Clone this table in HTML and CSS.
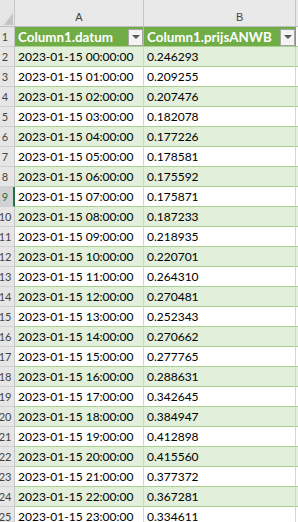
FILE: index.html
```html
<!DOCTYPE html>
<html>
<head>
<meta charset="utf-8">
<link rel="stylesheet" href="styles.css">
</head>
<body>
<div class="sheet">
  <div class="row colhead">
    <div class="corner"><svg width="9" height="12" viewBox="0 0 9 12"><polygon points="9,0 9,12 0,12" fill="#c4c4c4"/></svg></div>
    <div class="ch cha">A</div>
    <div class="ch chb">B</div>
    <div class="ch chc"></div>
  </div>
  <div class="row thead">
    <div class="rh"><span>1</span></div>
    <div class="cell th"><span>Column1.datum</span><i class="dd"></i></div>
    <div class="cell th"><span>Column1.prijsANWB</span><i class="dd"></i></div>
    <div class="cell th thc"></div>
  </div>
  <div class="row band"><div class="rh"><span>2</span></div><div class="cell">2023-01-15 00:00:00</div><div class="cell">0.246293</div><div class="cell"></div></div>
  <div class="row"><div class="rh"><span>3</span></div><div class="cell">2023-01-15 01:00:00</div><div class="cell">0.209255</div><div class="cell"></div></div>
  <div class="row band"><div class="rh"><span>4</span></div><div class="cell">2023-01-15 02:00:00</div><div class="cell">0.207476</div><div class="cell"></div></div>
  <div class="row"><div class="rh"><span>5</span></div><div class="cell">2023-01-15 03:00:00</div><div class="cell">0.182078</div><div class="cell"></div></div>
  <div class="row band"><div class="rh"><span>6</span></div><div class="cell">2023-01-15 04:00:00</div><div class="cell">0.177226</div><div class="cell"></div></div>
  <div class="row"><div class="rh"><span>7</span></div><div class="cell">2023-01-15 05:00:00</div><div class="cell">0.178581</div><div class="cell"></div></div>
  <div class="row band"><div class="rh"><span>8</span></div><div class="cell">2023-01-15 06:00:00</div><div class="cell">0.175592</div><div class="cell"></div></div>
  <div class="row active"><div class="rh"><span>9</span></div><div class="cell">2023-01-15 07:00:00</div><div class="cell">0.175871</div><div class="cell"></div></div>
  <div class="row band"><div class="rh"><span>10</span></div><div class="cell">2023-01-15 08:00:00</div><div class="cell">0.187233</div><div class="cell"></div></div>
  <div class="row"><div class="rh"><span>11</span></div><div class="cell">2023-01-15 09:00:00</div><div class="cell">0.218935</div><div class="cell"></div></div>
  <div class="row band"><div class="rh"><span>12</span></div><div class="cell">2023-01-15 10:00:00</div><div class="cell">0.220701</div><div class="cell"></div></div>
  <div class="row"><div class="rh"><span>13</span></div><div class="cell">2023-01-15 11:00:00</div><div class="cell">0.264310</div><div class="cell"></div></div>
  <div class="row band"><div class="rh"><span>14</span></div><div class="cell">2023-01-15 12:00:00</div><div class="cell">0.270481</div><div class="cell"></div></div>
  <div class="row"><div class="rh"><span>15</span></div><div class="cell">2023-01-15 13:00:00</div><div class="cell">0.252343</div><div class="cell"></div></div>
  <div class="row band"><div class="rh"><span>16</span></div><div class="cell">2023-01-15 14:00:00</div><div class="cell">0.270662</div><div class="cell"></div></div>
  <div class="row"><div class="rh"><span>17</span></div><div class="cell">2023-01-15 15:00:00</div><div class="cell">0.277765</div><div class="cell"></div></div>
  <div class="row band"><div class="rh"><span>18</span></div><div class="cell">2023-01-15 16:00:00</div><div class="cell">0.288631</div><div class="cell"></div></div>
  <div class="row"><div class="rh"><span>19</span></div><div class="cell">2023-01-15 17:00:00</div><div class="cell">0.342645</div><div class="cell"></div></div>
  <div class="row band"><div class="rh"><span>20</span></div><div class="cell">2023-01-15 18:00:00</div><div class="cell">0.384947</div><div class="cell"></div></div>
  <div class="row"><div class="rh"><span>21</span></div><div class="cell">2023-01-15 19:00:00</div><div class="cell">0.412898</div><div class="cell"></div></div>
  <div class="row band"><div class="rh"><span>22</span></div><div class="cell">2023-01-15 20:00:00</div><div class="cell">0.415560</div><div class="cell"></div></div>
  <div class="row"><div class="rh"><span>23</span></div><div class="cell">2023-01-15 21:00:00</div><div class="cell">0.377372</div><div class="cell"></div></div>
  <div class="row band"><div class="rh"><span>24</span></div><div class="cell">2023-01-15 22:00:00</div><div class="cell">0.367281</div><div class="cell"></div></div>
  <div class="row"><div class="rh"><span>25</span></div><div class="cell">2023-01-15 23:00:00</div><div class="cell">0.334611</div><div class="cell"></div></div>
</div>
</body>
</html>
```

FILE: styles.css
```css
html, body {
  margin: 0;
  padding: 0;
  background: #ffffff;
}
body {
  width: 298px;
  height: 522px;
  overflow: hidden;
  font-family: Lato, "Liberation Sans", sans-serif;
  font-size: 12px;
  color: #000;
}
.sheet {
  width: 298px;
  overflow: hidden;
}
.row {
  display: grid;
  grid-template-columns: 15px 129px 152px 2px;
  height: 20px;
}
.row > div {
  box-sizing: border-box;
  border-right: 1px solid #d4d4d4;
  border-bottom: 1px solid #a9d08e;
  overflow: hidden;
  white-space: nowrap;
}
.row > div:last-child {
  border-right: 0;
}
.colhead {
  height: 27px;
  background: #e9e9e9;
}
.colhead > div {
  border-right: 1px solid #c6c6c6;
  border-bottom: 1px solid #bdbdbd;
}
.corner {
  display: flex;
  align-items: flex-end;
  justify-content: flex-end;
  padding: 0 1px 1px 0;
  background: #e6e6e6;
}
.ch {
  color: #444;
  font-family: "Liberation Sans", sans-serif;
  font-size: 11px;
  line-height: 12px;
  padding-top: 11px;
}
.cha {
  text-align: center;
}
.chb {
  padding-left: 92px;
}
.rh {
  background: #e6e6e6;
  color: #444;
  font-size: 11px;
  border-right-color: #c6c6c6 !important;
  border-bottom-color: #d0d0d0 !important;
}
.rh span {
  display: flex;
  justify-content: center;
  width: 10px;
  line-height: 20px;
}
.active .rh {
  background: #d2d2d2;
  color: #217346;
  border-right: 2px solid #217346 !important;
}
.cell {
  padding-left: 3px;
  line-height: 20px;
}
.band > .cell {
  background: #e2efda;
}
.thead > .th {
  background: #70ad47;
  color: #fff;
  font-weight: bold;
  font-size: 13.4px;
  display: flex;
  align-items: center;
  justify-content: space-between;
  border-right-color: #70ad47;
  border-bottom-color: #a9d08e;
}
.thead > .th:nth-child(2) {
  border-right-color: #9fca82;
}
.thc {
  background: #ffffff !important;
}
.dd {
  box-sizing: border-box;
  flex: none;
  width: 15px;
  height: 17px;
  background: #f3f3f3;
  border: 1px solid #a6a6a6;
  display: flex;
  align-items: center;
  justify-content: center;
  margin-top: 1px;
}
.dd::after {
  content: "";
  width: 0;
  height: 0;
  border-left: 4px solid transparent;
  border-right: 4px solid transparent;
  border-top: 4px solid #595959;
}
```
